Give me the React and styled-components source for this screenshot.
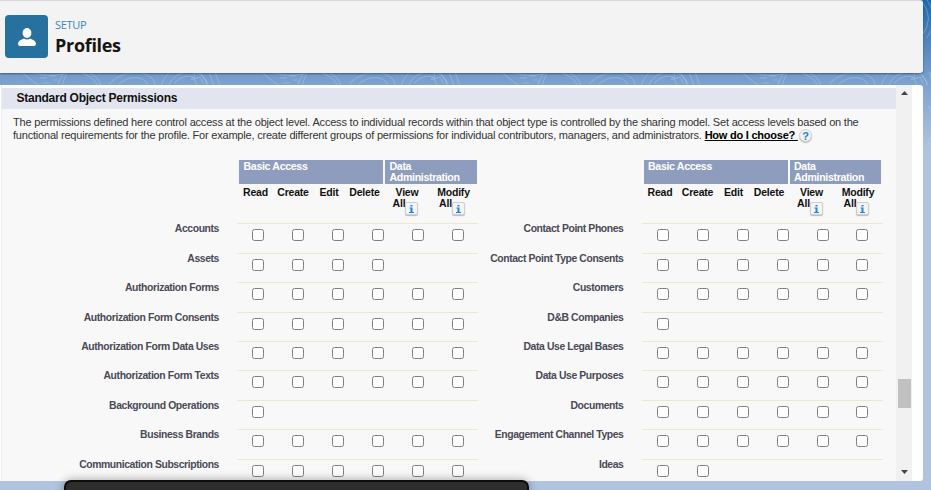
import React from "react";
import styled, { createGlobalStyle } from "styled-components";

const GlobalStyle = createGlobalStyle`
  * { box-sizing: border-box; }
  html, body { margin: 0; padding: 0; overflow: hidden; }
`;

const Page = styled.div`
  position: relative;
  display: flex;
  flex-direction: column;
  gap: 12px;
  width: 931px;
  height: 490px;
  padding-top: 1px;
  overflow: hidden;
  font-family: "Liberation Sans", Arial, sans-serif;
  color: #111;
  background: linear-gradient(#1f67aa 0, #5686bd 45px, #7ea3cf 85px, #b0c4df 150px);
`;

const Contours = styled.svg`
  position: absolute;
  inset: 0;
  width: 931px;
  height: 150px;
`;

const PageHeader = styled.header`
  position: relative;
  display: flex;
  flex: none;
  gap: 7px;
  width: 923px;
  height: 72px;
  padding: 14px 5px;
  background: #f3f3f3;
  border-radius: 0 3px 3px 0;
  box-shadow: 0 -1px 0 #d5d9de, 0 1px 2px rgba(20, 40, 70, 0.55);
`;

const ObjectIcon = styled.div`
  display: grid;
  place-items: center;
  width: 43px;
  height: 43px;
  border-radius: 4px;
  background: #27719f;
`;

const TitleBlock = styled.div`
  display: flex;
  flex-direction: column;
  font-family: "Open Sans", "Noto Sans", sans-serif;
`;

const Eyebrow = styled.span`
  margin-top: 3px;
  font-size: 11px;
  line-height: 14px;
  letter-spacing: -0.3px;
  color: #3e86b8;
`;

const Title = styled.h1`
  margin: 1px 0 0;
  font-size: 18px;
  font-weight: 700;
  line-height: 24px;
  letter-spacing: -0.3px;
  color: #151515;
`;

const Card = styled.main`
  position: relative;
  display: flex;
  flex: none;
  width: 923px;
  height: 396px;
  background: #fff;
  border-radius: 0 3px 3px 0;
  overflow: hidden;
`;

const Content = styled.div`
  width: 895px;
  height: 396px;
  margin-left: 1px;
  padding-top: 3px;
  background: linear-gradient(#fff 3px, #f8f8f8 3px);
  border-left: 1px solid #ececec;
  overflow: hidden;
`;

const SectionTitle = styled.h2`
  margin: 0;
  height: 21px;
  padding-left: 14.5px;
  background: #e2e5ef;
  font-size: 12px;
  line-height: 20px;
  letter-spacing: -0.25px;
  color: #111;
  white-space: nowrap;
`;

const Description = styled.p`
  margin: 7px 0 0 11px;
  font-size: 11px;
  line-height: 13px;
  color: #333;
  white-space: nowrap;
`;

const DescriptionLine = styled.span`
  display: flex;
  align-items: center;
  height: 13px;
  letter-spacing: -0.2px;
`;

const HelpLink = styled.a`
  margin-left: 3px;
  font-weight: 700;
  color: #000;
  letter-spacing: -0.23px;
  text-decoration: underline;
`;

const HelpBadge = styled.span`
  display: grid;
  place-items: center;
  width: 13px;
  height: 13px;
  margin-left: 1px;
  border-radius: 50%;
  border: 1px solid #d3d3d3;
  background: #f1f1f1;
  box-shadow: 0 1px 1px #bbb;
  color: #1681df;
  font-size: 11px;
  font-weight: 700;
  line-height: 12px;
`;

const Tables = styled.div`
  display: grid;
  grid-template-columns: 404.5px 404.5px;
  margin-top: 18px;
`;

const HeaderArea = styled.div`
  height: 63.4px;
  margin-left: 237px;
  width: 239px;
`;

const GroupRow = styled.div`
  display: grid;
  grid-template-columns: 144px 91.5px;
  gap: 2px;
  height: 24px;
`;

const GroupHead = styled.div`
  padding: 1px 4.5px;
  background: #8e9dbe;
  color: #fff;
  font-size: 10.6px;
  font-weight: 700;
  line-height: 11px;
  letter-spacing: -0.33px;
`;

const ColumnRow = styled.div`
  display: grid;
  grid-template-columns: 33px 42px 30px 41px 44px 49px;
  padding-top: 3px;
`;

const ColumnHead = styled.div`
  font-size: 10.5px;
  font-weight: 700;
  line-height: 11px;
  letter-spacing: -0.2px;
  text-align: center;
  white-space: nowrap;
  color: #111;
`;

const AllLine = styled.span`
  display: flex;
  justify-content: center;
  align-items: flex-start;
  height: 16px;
  margin-left: -3px;
`;

const InfoBadge = styled.span`
  display: grid;
  place-items: center;
  width: 13px;
  height: 13px;
  margin-top: 4px;
  border: 1px solid #cfcfcf;
  border-radius: 2px;
  background: #f4f4f4;
  box-shadow: 0 1px 1px #bbb;
`;

const Row = styled.div`
  display: grid;
  grid-template-columns: 217px 241px;
  column-gap: 18px;
  height: 29.42px;
`;

const Label = styled.span`
  font-size: 10.4px;
  font-weight: 700;
  line-height: 12px;
  letter-spacing: -0.4px;
  text-align: right;
  white-space: nowrap;
  color: #4a4a56;
`;

const Cells = styled.div`
  display: grid;
  grid-template-columns: repeat(6, 39.9px);
  justify-content: start;
  align-items: start;
  padding: 5px 0 0 1.5px;
  border-top: 1px solid #ece9cf;
`;

const Checkbox = styled.input.attrs({ type: "checkbox" })`
  appearance: none;
  justify-self: center;
  width: 12px;
  height: 12px;
  margin: 0;
  border: 1px solid #808080;
  border-radius: 2.5px;
  background: #fff;
`;

const Scrollbar = styled.div`
  display: flex;
  flex-direction: column;
  align-items: center;
  width: 16px;
  height: 396px;
  padding: 6px 0 7px;
  background: #f1f1f1;
`;

const Arrow = styled.svg`
  width: 7px;
  height: 4px;
`;

const Thumb = styled.div`
  width: 13px;
  height: 29px;
  margin: 284px 0 auto;
  background: #c1c1c1;
`;

const Dock = styled.div`
  position: absolute;
  left: 64px;
  top: 480px;
  width: 465px;
  height: 30px;
  border: 2px solid #0c0c0c;
  border-radius: 7px;
  background: #2d2d2d;
  box-shadow: 0 0 10px rgba(0, 0, 0, 0.35);
`;

const left = [
  ["Accounts", 6],
  ["Assets", 4],
  ["Authorization Forms", 6],
  ["Authorization Form Consents", 6],
  ["Authorization Form Data Uses", 6],
  ["Authorization Form Texts", 6],
  ["Background Operations", 1],
  ["Business Brands", 6],
  ["Communication Subscriptions", 6],
];

const right = [
  ["Contact Point Phones", 6],
  ["Contact Point Type Consents", 6],
  ["Customers", 6],
  ["D&B Companies", 1],
  ["Data Use Legal Bases", 6],
  ["Data Use Purposes", 6],
  ["Documents", 6],
  ["Engagement Channel Types", 6],
  ["Ideas", 2],
];

const actions = ["Read", "Create", "Edit", "Delete", "View All", "Modify All"];

function InfoIcon() {
  return (
    <InfoBadge>
      <svg width="5" height="8" viewBox="0 0 5 8" fill="#2583d8">
        <path d="M1.5 0h2v1.5h-2zM.5 2.5h3V7H5v1H0V7h1.5V3.5h-1z" />
      </svg>
    </InfoBadge>
  );
}

function PermissionTable({ rows }) {
  return (
    <section>
      <HeaderArea>
        <GroupRow>
          <GroupHead>Basic Access</GroupHead>
          <GroupHead>Data Administration</GroupHead>
        </GroupRow>
        <ColumnRow>
          {actions.map((name) => {
            const [first, all] = name.split(" ");
            return (
              <ColumnHead key={name}>
                {first}
                {all && <AllLine>{all}<InfoIcon /></AllLine>}
              </ColumnHead>
            );
          })}
        </ColumnRow>
      </HeaderArea>
      {rows.map(([name, count]) => (
        <Row key={name}>
          <Label>{name}</Label>
          <Cells>
            {actions.slice(0, count).map((action) => (
              <Checkbox key={action} aria-label={`${name} ${action}`} />
            ))}
          </Cells>
        </Row>
      ))}
    </section>
  );
}

function ContourLines() {
  return (
    <Contours>
      <defs>
        <pattern id="contours" width="240" height="150" patternUnits="userSpaceOnUse">
          <g fill="none" stroke="#c4d8ef" strokeOpacity=".36" strokeWidth="1">
            <path d="M22 72q14 13 19 14M31 72q22 7 38 0M40 78h7m3-2h6m-13 7h6m4-3h5M58 84l7-14M62 85l6-15M87 72q12 4 14 14M80 72q14 5 18 14M109 84q14-14 33-11q13 4 13 12M119 84q9-8 20-6q8 2 8 7M161 86q5-18 22-16M168 86q7-15 24-14q15 2 15 14M174 83q12-10 19-6l-2 3l9-3l3 6M215 72l5 14M209 72l5 14" />
            <path d="M201 0q15 18 0 37t7 47M207 0q13 18 0 38M208 105q12 14 0 40M201 30q-10-7-5 8M202 60q-14 13-4 27" />
          </g>
        </pattern>
      </defs>
      <rect width="931" height="150" fill="url(#contours)" />
    </Contours>
  );
}

export default function App() {
  return (
    <Page>
      <GlobalStyle />
      <ContourLines />
      <PageHeader>
        <ObjectIcon>
          <svg width="18" height="18" viewBox="0 0 18 18" fill="#fff">
            <ellipse cx="9" cy="5" rx="4.4" ry="5" />
            <path d="M6 10.4q3 2 6 0c3 1 6 2.7 6 5.4q0 2.2-2.2 2.2H2.2Q0 18 0 15.8c0-2.7 3-4.4 6-5.4z" />
          </svg>
        </ObjectIcon>
        <TitleBlock>
          <Eyebrow>SETUP</Eyebrow>
          <Title>Profiles</Title>
        </TitleBlock>
      </PageHeader>
      <Card>
        <Content>
          <SectionTitle>Standard Object Permissions</SectionTitle>
          <Description>
            <DescriptionLine>
              The permissions defined here control access at the object level. Access to individual records within that object type is controlled by the sharing model. Set access levels based on the
            </DescriptionLine>
            <DescriptionLine>
              functional requirements for the profile. For example, create different groups of permissions for individual contributors, managers, and administrators.
              <HelpLink>How do I choose?&nbsp;</HelpLink>
              <HelpBadge>?</HelpBadge>
            </DescriptionLine>
          </Description>
          <Tables>
            <PermissionTable rows={left} />
            <PermissionTable rows={right} />
          </Tables>
        </Content>
        <Scrollbar>
          <Arrow viewBox="0 0 7 4" fill="#444"><path d="M0 4L3.5 0L7 4z" /></Arrow>
          <Thumb />
          <Arrow viewBox="0 0 7 4" fill="#444"><path d="M0 0L3.5 4L7 0z" /></Arrow>
        </Scrollbar>
      </Card>
      <Dock />
    </Page>
  );
}
